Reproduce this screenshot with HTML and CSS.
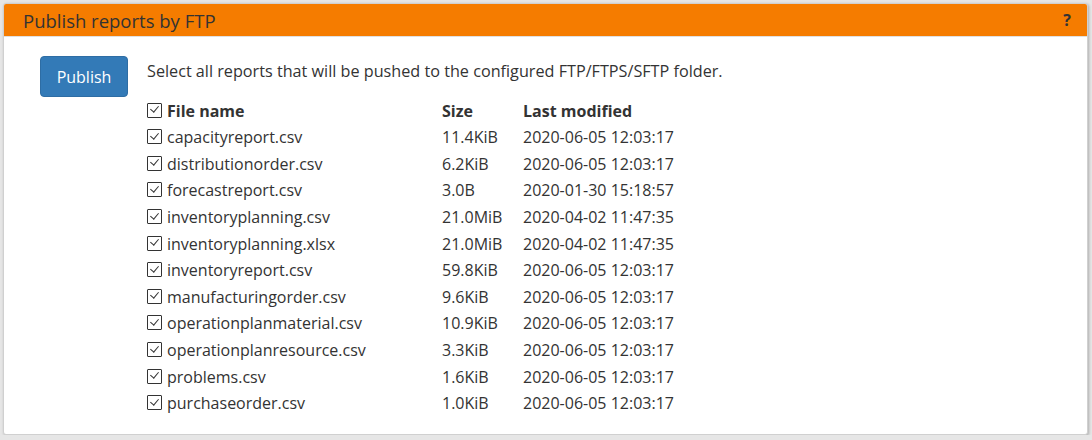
FILE: index.html
```html
<!DOCTYPE html>
<html>
<head>
<meta charset="utf-8">
<link rel="stylesheet" href="styles.css">
</head>
<body>
<div class="panel">
  <div class="panel-heading">
    <span class="panel-title">Publish reports by FTP</span>
    <span class="help">?</span>
  </div>
  <div class="panel-body">
    <div class="btn-col"><button class="btn">Publish</button></div>
    <div class="content">
      <p class="intro">Select all reports that will be pushed to the configured FTP/FTPS/SFTP folder.</p>
      <table class="files">
        <thead>
          <tr><th class="c-name"><span class="cb"></span>File name</th><th class="c-size">Size</th><th>Last modified</th></tr>
        </thead>
        <tbody>
          <tr><td><span class="cb"></span>capacityreport.csv</td><td>11.4KiB</td><td>2020-06-05 12:03:17</td></tr>
          <tr><td><span class="cb"></span>distributionorder.csv</td><td>6.2KiB</td><td>2020-06-05 12:03:17</td></tr>
          <tr><td><span class="cb"></span>forecastreport.csv</td><td>3.0B</td><td>2020-01-30 15:18:57</td></tr>
          <tr><td><span class="cb"></span>inventoryplanning.csv</td><td>21.0MiB</td><td>2020-04-02 11:47:35</td></tr>
          <tr><td><span class="cb"></span>inventoryplanning.xlsx</td><td>21.0MiB</td><td>2020-04-02 11:47:35</td></tr>
          <tr><td><span class="cb"></span>inventoryreport.csv</td><td>59.8KiB</td><td>2020-06-05 12:03:17</td></tr>
          <tr><td><span class="cb"></span>manufacturingorder.csv</td><td>9.6KiB</td><td>2020-06-05 12:03:17</td></tr>
          <tr><td><span class="cb"></span>operationplanmaterial.csv</td><td>10.9KiB</td><td>2020-06-05 12:03:17</td></tr>
          <tr><td><span class="cb"></span>operationplanresource.csv</td><td>3.3KiB</td><td>2020-06-05 12:03:17</td></tr>
          <tr><td><span class="cb"></span>problems.csv</td><td>1.6KiB</td><td>2020-06-05 12:03:17</td></tr>
          <tr><td><span class="cb"></span>purchaseorder.csv</td><td>1.0KiB</td><td>2020-06-05 12:03:17</td></tr>
        </tbody>
      </table>
    </div>
  </div>
</div>
</body>
</html>
```
FILE: styles.css
```css
html, body {
  margin: 0;
  padding: 0;
}
body {
  background: #e6e6e6;
  font-family: "Open Sans", "DejaVu Sans", sans-serif;
  color: #333;
  padding: 3px 3px 0 3px;
}
.panel {
  background: #fff;
  border: 1px solid #d0d0d0;
  border-radius: 3px;
  box-shadow: 1px 1px 3px rgba(0,0,0,0.25);
  width: 1085px;
  height: 432px;
  box-sizing: border-box;
  overflow: hidden;
}
.panel-heading {
  background: #f57c00;
  height: 32px;
  display: flex;
  align-items: center;
  justify-content: space-between;
  padding: 0 16px 0 19px;
  border-bottom: 1px solid #e0e0e0;
}
.panel-title {
  font-size: 18.5px;
  color: #333;
}
.help {
  font-weight: bold;
  font-size: 16px;
  color: #333;
}
.panel-body {
  display: flex;
  padding: 19px 20px 0 36px;
}
.btn-col {
  width: 107px;
  flex: none;
}
.btn {
  width: 88px;
  height: 41px;
  background: #337ab7;
  border: 1px solid #2e6da4;
  border-radius: 4px;
  color: #fff;
  font-family: "Open Sans", sans-serif;
  font-size: 16px;
  padding: 0;
}
.content {
  flex: 1;
}
.intro {
  margin: 4px 0 0 0;
  font-size: 16.2px;
  line-height: 22px;
}
.files {
  border-collapse: collapse;
  margin-top: 15px;
  font-size: 16px;
}
.files th {
  text-align: left;
  font-weight: bold;
  padding: 0;
  height: 27px;
  line-height: 20px;
}
.files td {
  padding: 0;
  height: 26.6px;
  line-height: 20px;
}
.c-name {
  width: 295px;
}
.c-size {
  width: 81px;
}
.cb {
  display: inline-block;
  width: 13px;
  height: 13px;
  border: 1px solid #333;
  border-radius: 1px;
  margin-right: 5px;
  vertical-align: -1px;
  position: relative;
}
.cb::after {
  content: "";
  position: absolute;
  left: 3.5px;
  top: 0.5px;
  width: 4px;
  height: 7px;
  border-right: 1.5px solid #333;
  border-bottom: 1.5px solid #333;
  transform: rotate(40deg);
}
```
